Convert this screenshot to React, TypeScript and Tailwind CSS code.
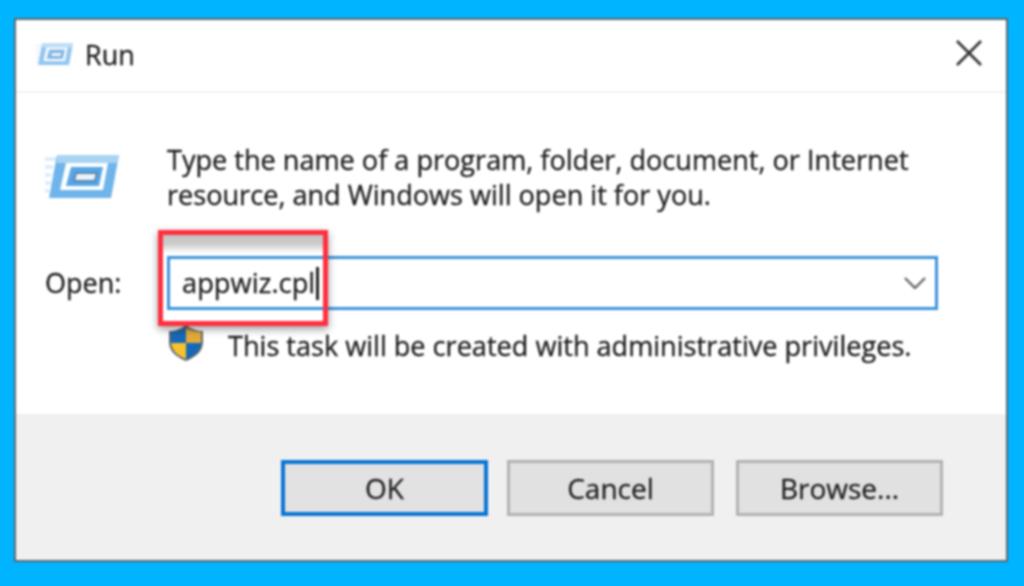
const font = "font-['Open_Sans','Noto_Sans',sans-serif]";

function RunIcon({ className }: { className: string }) {
  return (
    <svg viewBox="0 0 76 48" className={className}>
      <path d="M12 2H74L66 45H4Z" fill="#6fb4ea" />
      <path d="M12 2H74L72 10H12Z" fill="#a9d3f3" />
      <path d="M21 10H63L58 37H15Z" fill="#ffffff" />
      <path d="M26 14H58L54 33H21Z" fill="#58a6e6" />
      <path d="M31 20H52L50 28H29Z" fill="#e8f3fb" stroke="#5b87ad" strokeWidth="2" />
      <path d="M0 6H11M0 14H8M0 22H6M0 30H6M0 38H4" stroke="#cfe5f6" strokeWidth="2.5" />
    </svg>
  );
}

function Shield() {
  return (
    <svg viewBox="0 0 36 38" className="mb-[6px] ml-[1px] h-[38px] w-[36px] shrink-0">
      <path d="M18 1C13 5 7 7 1 7V18C1 27 8 33 18 37C28 33 35 27 35 18V7C29 7 23 5 18 1Z" fill="#5d6670" />
      <path d="M18 4V19H3V8C9 8 14 6 18 4Z" fill="#1669b8" />
      <path d="M18 4C22 6 27 8 33 8V19H18Z" fill="#e3a93a" />
      <path d="M3 19H18V35C10 32 4 27 3 19Z" fill="#f8c22e" />
      <path d="M18 19H33C32 27 26 32 18 35Z" fill="#1669b8" />
    </svg>
  );
}

function Button({ label, primary, className = "" }: { label: string; primary?: boolean; className?: string }) {
  return (
    <button
      className={
        (primary
          ? "flex h-[56px] w-[207px] items-center justify-center border-[4px] border-[#0a74d6] bg-[#e2e2e2] text-[28px] text-[#1f1f1f] "
          : "flex h-[56px] w-[207px] items-center justify-center border-[3px] border-[#b2b2b2] bg-[#e1e1e1] text-[28px] text-[#1f1f1f] ") + className
      }
    >
      {label}
    </button>
  );
}

export default function App() {
  return (
    <div className={`h-[586px] w-[1024px] overflow-hidden bg-[#00b4ff] pl-[14px] pt-[18px] ${font}`}>
      <div className="flex h-[544px] w-[994px] flex-col border-2 border-[#5a6a70] bg-white text-[#1c1c1c] blur-[0.8px] [-webkit-text-stroke:0.3px_#1c1c1c]">
        <div className="flex h-[73px] shrink-0 items-center border-b-2 border-[#f2f2f2] pl-[20px] pr-[24px]">
          <RunIcon className="mb-[3px] h-[27px] w-[38px] opacity-75" />
          <span className="ml-[11px] mb-[1px] text-[27px]">Run</span>
          <svg viewBox="0 0 26 26" className="mb-[5px] ml-auto h-[26px] w-[26px]">
            <path d="M1 1L25 25M25 1L1 25" stroke="#333" strokeWidth="2.6" />
          </svg>
        </div>
        <div className="relative flex min-h-0 flex-1 flex-col pl-[29px] pr-[68px]">
          <div className="mt-[49px] flex items-start">
            <RunIcon className="mt-[11px] h-[48px] w-[76px] shrink-0" />
            <p className="ml-[46px] text-[27.1px] leading-[35px]">
              Type the name of a program, folder, document, or Internet
              <br />
              resource, and Windows will open it for you.
            </p>
          </div>
          <div className="mt-[44px] flex items-center">
            <span className="w-[122px] text-[27px]">Open:</span>
            <div className="flex h-[54px] flex-1 items-center border-[3px] border-[#3a94dc] pl-[12px] pr-[9px]">
              <span className="text-[27.3px]">appwiz.cpl</span>
              <span className="ml-[1px] h-[33px] w-[3px] bg-[#222]" />
              <svg viewBox="0 0 22 12" className="ml-auto h-[12px] w-[22px]">
                <path d="M1 1L11 11L21 1" fill="none" stroke="#666" strokeWidth="2.4" />
              </svg>
            </div>
          </div>
          <div className="ml-[122px] mt-[14px] flex items-center gap-[24px]">
            <Shield />
            <span className="text-[27.1px]">This task will be created with administrative privileges.</span>
          </div>
          <div className="pointer-events-none absolute left-[142px] top-[137px] h-[96px] w-[170px] border-[5px] border-[#ff2f3f] shadow-[0_3px_8px_rgba(0,0,0,0.4)]">
            <div className="h-[18px] bg-gradient-to-b from-[#c4c4c4] via-[#cccccc] via-50% to-transparent" />
          </div>
        </div>
        <div className="flex h-[146px] shrink-0 items-start justify-end gap-[19px] bg-[#f0f0f0] pr-[63px] pt-[46px]">
          <Button label="OK" primary />
          <Button label="Cancel" />
          <Button label="Browse..." className="ml-[3px]" />
        </div>
      </div>
    </div>
  );
}
